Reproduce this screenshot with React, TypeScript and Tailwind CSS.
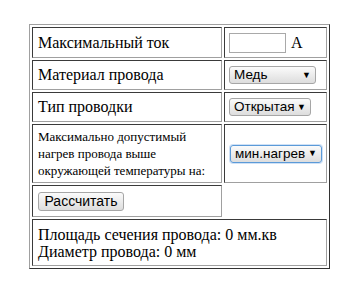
import React from "react";

const cellBorder =
  "border border-t-[#3a3a3a] border-l-[#3a3a3a] border-r-[#a0a0a0] border-b-[#a0a0a0] p-0 align-middle";

function FakeSelect({ label, width, focused }: { label: string; width: string; focused?: boolean }) {
  return (
    <div
      className={
        "flex items-center justify-between h-[18px] rounded-[3px] bg-linear-to-b from-[#fbfbfb] to-[#dddddd] pl-[4px] pr-[4px] font-['Liberation_Sans',Arial,sans-serif] text-[13.5px] leading-none text-black " +
        width +
        " " +
        (focused ? "border border-[#5b9ad8] shadow-[0_0_0_1px_#cfe1f6]" : "border border-[#a6a6a6]")
      }
    >
      <span>{label}</span>
      <span className="text-[9px] leading-none">▼</span>
    </div>
  );
}

export default function App() {
  return (
    <div className="min-h-screen bg-white pl-[29px] pt-[24px] font-['Liberation_Serif','Times_New_Roman',serif] text-black">
      <table className="border-separate border-spacing-[2px] border border-t-[#a0a0a0] border-l-[#a0a0a0] border-r-[#333333] border-b-[#333333]">
        <tbody>
          <tr>
            <td className={cellBorder}>
              <div className="flex h-[29px] w-[188px] items-center pl-[5px] text-[16px] leading-[18px]">
                Максимальный ток
              </div>
            </td>
            <td className={cellBorder}>
              <div className="flex h-[29px] w-[101px] items-center gap-[5px] pl-[4px]">
                <input
                  className="h-[20px] w-[57px] border border-[#a9a9a9] bg-white outline-none"
                  type="text"
                />
                <span className="text-[16px] leading-[18px]">А</span>
              </div>
            </td>
          </tr>
          <tr>
            <td className={cellBorder}>
              <div className="flex h-[28px] items-center pl-[5px] text-[16px] leading-[18px]">
                Материал провода
              </div>
            </td>
            <td className={cellBorder}>
              <div className="flex h-[28px] items-center pl-[4px]">
                <FakeSelect label="Медь" width="w-[87px]" />
              </div>
            </td>
          </tr>
          <tr>
            <td className={cellBorder}>
              <div className="flex h-[28px] items-center pl-[5px] text-[16px] leading-[18px]">
                Тип проводки
              </div>
            </td>
            <td className={cellBorder}>
              <div className="flex h-[28px] items-center pl-[4px]">
                <FakeSelect label="Открытая" width="w-[82px]" />
              </div>
            </td>
          </tr>
          <tr>
            <td className={cellBorder}>
              <div className="flex h-[57px] items-center pl-[5px] text-[13px] leading-[17px]">
                <span>
                  Максимально допустимый
                  <br />
                  нагрев провода выше
                  <br />
                  окружающей температуры на:
                </span>
              </div>
            </td>
            <td className={cellBorder}>
              <div className="flex h-[57px] items-center pl-[5px]">
                <FakeSelect label="мин.нагрев" width="w-[92px]" focused />
              </div>
            </td>
          </tr>
          <tr>
            <td className={cellBorder}>
              <div className="flex h-[30px] items-center pl-[5px]">
                <button className="flex h-[19px] w-[86px] items-center justify-center rounded-[3px] border border-[#a6a6a6] bg-linear-to-b from-[#fbfbfb] to-[#dddddd] font-['Liberation_Sans',Arial,sans-serif] text-[14px] leading-none text-black">
                  Рассчитать
                </button>
              </div>
            </td>
          </tr>
          <tr>
            <td className={cellBorder} colSpan={2}>
              <div className="flex h-[45px] items-center pl-[5px] text-[16px] leading-[17px]">
                <span>
                  Площадь сечения провода: 0 мм.кв
                  <br />
                  Диаметр провода: 0 мм
                </span>
              </div>
            </td>
          </tr>
        </tbody>
      </table>
    </div>
  );
}
